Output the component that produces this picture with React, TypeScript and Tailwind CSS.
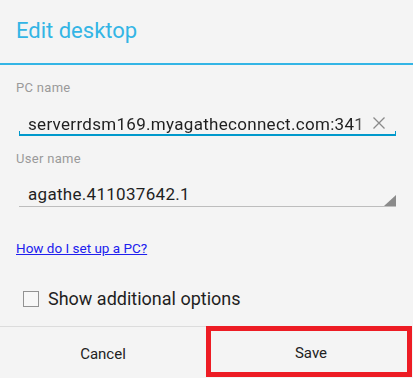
import React from "react";

export default function App() {
  return (
    <div
      className="w-[413px] h-[378px] bg-[#f4f4f4] flex flex-col overflow-hidden"
      style={{ fontFamily: "Roboto, 'Liberation Sans', sans-serif" }}
    >
      {/* Header */}
      <div className="h-[65px] flex items-center px-[16px] border-b-2 border-[#33b5e5] shrink-0">
        <span className="text-[22px] leading-[26px] text-[#33b5e5] -mt-[2px]">Edit desktop</span>
      </div>

      <div className="flex flex-col px-[16px] shrink-0">
        {/* PC name */}
        <div className="mt-[15px] text-[13px] leading-[16px] tracking-[0.3px] text-[#9a9a9a]">PC name</div>
        <div className="mt-[18px] ml-[3px] w-[377px] flex flex-col">
          <div className="h-[22px] flex items-start">
            <div className="ml-[9px] w-[338px] whitespace-nowrap text-[17px] leading-[20px] tracking-[0.3px] text-[#1f1f1f] [mask-image:linear-gradient(to_right,black_97%,rgba(0,0,0,0.35))]">
              serverrdsm169.myagatheconnect.com:341
            </div>
            <svg width="12" height="12" viewBox="0 0 12 12" className="ml-[7px] mt-[3px]">
              <path d="M0.5 0.5 L11.5 11.5 M11.5 0.5 L0.5 11.5" stroke="#8a8a8a" strokeWidth="1.3" fill="none" />
            </svg>
          </div>
          <div className="-mt-[5px] h-[5px] border-l border-r border-b-2 border-[#0099cc]" />
        </div>

        {/* User name */}
        <div className="mt-[15px] text-[13px] leading-[16px] tracking-[0.3px] text-[#9a9a9a]">User name</div>
        <div className="mt-[17px] ml-[3px] w-[377px] h-[23px] flex items-end justify-between border-b border-[#bdbdbd]">
          <div className="self-start ml-[9px] text-[17px] leading-[20px] tracking-[0.3px] text-[#1f1f1f]">agathe.411037642.1</div>
          <svg width="12" height="11" viewBox="0 0 12 11" className="block">
            <polygon points="12,0 12,11 0,11" fill="#8a8a8a" />
          </svg>
        </div>

        {/* Link */}
        <a href="#" className="mt-[33px] self-start text-[13.5px] leading-[16px] text-[#2020ee] underline">
          How do I set up a PC?
        </a>

        {/* Checkbox */}
        <div className="mt-[31px] h-[24px] flex items-center">
          <div className="ml-[7px] w-[16px] h-[16px] border-[1.5px] border-[#929292] bg-[#f7f7f7]" />
          <span className="ml-[9px] text-[18px] leading-[24px] text-[#1f1f1f]">Show additional options</span>
        </div>
      </div>

      <div className="flex-1" />

      {/* Buttons */}
      <div className="h-[52px] flex shrink-0">
        <div className="w-[206px] border-t border-[#dcdcdc] flex items-center justify-center pt-[4px] text-[15px] text-[#222]">
          Cancel
        </div>
        <div className="w-[207px] pr-[1px] pb-[1px]">
          <div className="w-full h-full border-[5px] border-[#ed1c24] flex items-center justify-center pt-[3px] pl-[4px] text-[15px] text-[#222]">
            Save
          </div>
        </div>
      </div>
    </div>
  );
}
